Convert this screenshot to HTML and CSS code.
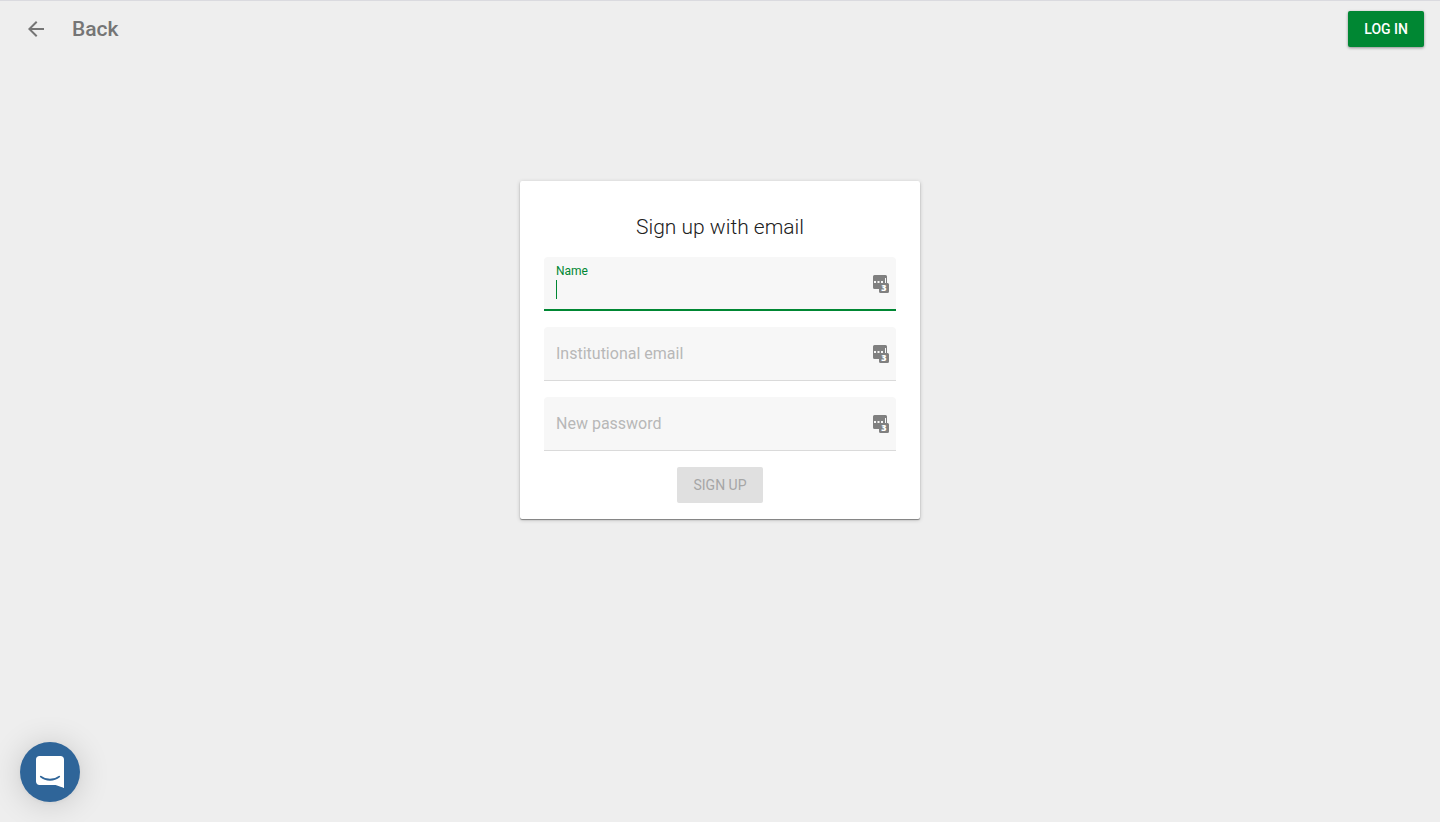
FILE: index.html
```html
<!DOCTYPE html>
<html lang="en">

<head>
    <meta charset="UTF-8">
    <meta name="viewport" content="width=device-width, initial-scale=1.0">
    <title>Sign up</title>
    <link rel="stylesheet" href="styles.css">
</head>

<body>
    <header class="header">
        <a class="back" href="#">
            <svg class="back-icon" viewBox="0 0 24 24" aria-hidden="true">
                <path d="M20 11H7.83l5.59-5.59L12 4l-8 8 8 8 1.41-1.41L7.83 13H20v-2z"/>
            </svg>
            Back
        </a>
        <button class="button login-button" type="button">LOG IN</button>
    </header>

    <main class="main">
        <form class="card">
            <h1 class="title">Sign up with email</h1>

            <div class="field active">
                <label for="name">Name</label>
                <input type="text" id="name">
                <svg class="field-icon" viewBox="0 0 16 18" aria-hidden="true">
                    <path d="M1.500 0h11A1.500 1.500 0 0 1 14 1.500V8h.500A1.500 1.500 0 0 1 16 9.500v7a1.500 1.500 0 0 1-1.500 1.500h-7A1.500 1.500 0 0 1 6 16.500V14H1.500A1.500 1.500 0 0 1 0 12.500v-11A1.500 1.500 0 0 1 1.500 0z" fill="#808080"/>
                    <path d="M1 6h2v2H1zM4.500 6h2v2h-2zM8 6h2v2H8zM12 3h1v5h-1z" fill="#f7f7f7"/>
                    <text x="11" y="16" text-anchor="middle">3</text>
                </svg>
            </div>

            <div class="field">
                <label for="email">Institutional email</label>
                <input type="email" id="email">
                <svg class="field-icon" viewBox="0 0 16 18" aria-hidden="true">
                    <path d="M1.500 0h11A1.500 1.500 0 0 1 14 1.500V8h.500A1.500 1.500 0 0 1 16 9.500v7a1.500 1.500 0 0 1-1.500 1.500h-7A1.500 1.500 0 0 1 6 16.500V14H1.500A1.500 1.500 0 0 1 0 12.500v-11A1.500 1.500 0 0 1 1.500 0z" fill="#808080"/>
                    <path d="M1 6h2v2H1zM4.500 6h2v2h-2zM8 6h2v2H8zM12 3h1v5h-1z" fill="#f7f7f7"/>
                    <text x="11" y="16" text-anchor="middle">3</text>
                </svg>
            </div>

            <div class="field">
                <label for="password">New password</label>
                <input type="password" id="password">
                <svg class="field-icon" viewBox="0 0 16 18" aria-hidden="true">
                    <path d="M1.500 0h11A1.500 1.500 0 0 1 14 1.500V8h.500A1.500 1.500 0 0 1 16 9.500v7a1.500 1.500 0 0 1-1.500 1.500h-7A1.500 1.500 0 0 1 6 16.500V14H1.500A1.500 1.500 0 0 1 0 12.500v-11A1.500 1.500 0 0 1 1.500 0z" fill="#808080"/>
                    <path d="M1 6h2v2H1zM4.500 6h2v2h-2zM8 6h2v2H8zM12 3h1v5h-1z" fill="#f7f7f7"/>
                    <text x="11" y="16" text-anchor="middle">3</text>
                </svg>
            </div>

            <button class="button signup-button" type="submit" disabled>SIGN UP</button>
        </form>
    </main>

    <button class="chat-button" type="button" aria-label="Open chat">
        <svg viewBox="0 0 28 32" aria-hidden="true">
            <path d="M28 32s-4.700-1.850-8.400-3H3.400C1.500 29 0 27.500 0 25.600V3.400C0 1.500 1.500 0 3.400 0h21.200C26.500 0 28 1.500 28 3.400z" fill="#fff"/>
            <path d="M4.800 20.600c5.200 4.200 13.200 4.200 18.400 0" fill="none" stroke="#2f6599" stroke-width="1.800" stroke-linecap="round"/>
        </svg>
    </button>
</body>

</html>
```
FILE: styles.css
```css
* {
    box-sizing: border-box;
}

body {
    margin: 0;
    min-height: 100vh;
    border-top: 1px solid #dadadf;
    background-color: #eeeeee;
    font-family: Roboto, "Liberation Sans", sans-serif;
}

.header {
    display: flex;
    align-items: center;
    justify-content: space-between;
    height: 56px;
    padding: 0 16px 0 24px;
}

.back {
    display: flex;
    align-items: center;
    gap: 24px;
    color: #757575;
    font-size: 21px;
    font-weight: 500;
    line-height: 24px;
    text-decoration: none;
}

.back-icon {
    width: 24px;
    height: 24px;
    fill: #757575;
}

.button {
    height: 36px;
    padding: 0 16px;
    border: none;
    border-radius: 2px;
    font-family: inherit;
    font-size: 14px;
    font-weight: 500;
    cursor: pointer;
}

.login-button {
    background-color: #008733;
    color: #fff;
    box-shadow: 0 1px 3px rgba(0, 0, 0, 0.4);
}

.main {
    padding: 124px 16px 16px;
}

.card {
    display: flex;
    flex-direction: column;
    gap: 16px;
    max-width: 400px;
    margin: 0 auto;
    padding: 32px 24px 16px;
    border-radius: 2px;
    background-color: #fff;
    box-shadow: 0 1px 1px rgba(0, 0, 0, 0.4), 0 1px 4px rgba(0, 0, 0, 0.2);
}

.title {
    margin: 0;
    color: #212121;
    font-size: 21px;
    font-weight: 300;
    line-height: 28px;
    text-align: center;
}

.field {
    position: relative;
    height: 54px;
    border-bottom: 1px solid #dadada;
    border-radius: 4px 4px 0 0;
    background-color: #f7f7f7;
}

.field input {
    width: 100%;
    height: 100%;
    padding: 20px 36px 8px 12px;
    border: none;
    outline: none;
    background: none;
    font-family: inherit;
    font-size: 16px;
    caret-color: transparent;
}

/* the label floats over the input */
.field label {
    position: absolute;
    top: 16px;
    left: 12px;
    color: #b8b8b8;
    font-size: 16px;
    line-height: 22px;
    pointer-events: none;
}

.field-icon {
    position: absolute;
    top: 18px;
    right: 7px;
    width: 16px;
    height: 18px;
    overflow: visible;
    pointer-events: none;
}

.field-icon text {
    fill: #fff;
    font-family: "Open Sans", sans-serif;
    font-size: 9px;
    font-weight: 800;
}

.field.active {
    border-bottom: 2px solid #008733;
}

.field.active label {
    top: 6px;
    color: #008733;
    font-size: 12px;
    line-height: 16px;
}

/* text cursor */
.field.active::after {
    content: "";
    position: absolute;
    top: 23px;
    left: 12px;
    width: 1px;
    height: 19px;
    background-color: #008733;
}

.signup-button {
    align-self: center;
    min-width: 86px;
    background-color: #e0e0e0;
    color: #a6a6a6;
    font-weight: 400;
    cursor: default;
}

.chat-button {
    position: fixed;
    bottom: 20px;
    left: 20px;
    display: flex;
    align-items: center;
    justify-content: center;
    width: 60px;
    height: 60px;
    padding: 0;
    border: none;
    border-radius: 50%;
    background-color: #2f6599;
    box-shadow: 0 1px 6px rgba(0, 0, 0, 0.06), 0 2px 32px rgba(0, 0, 0, 0.16);
    cursor: pointer;
}

.chat-button svg {
    width: 28px;
    height: 32px;
}
```
